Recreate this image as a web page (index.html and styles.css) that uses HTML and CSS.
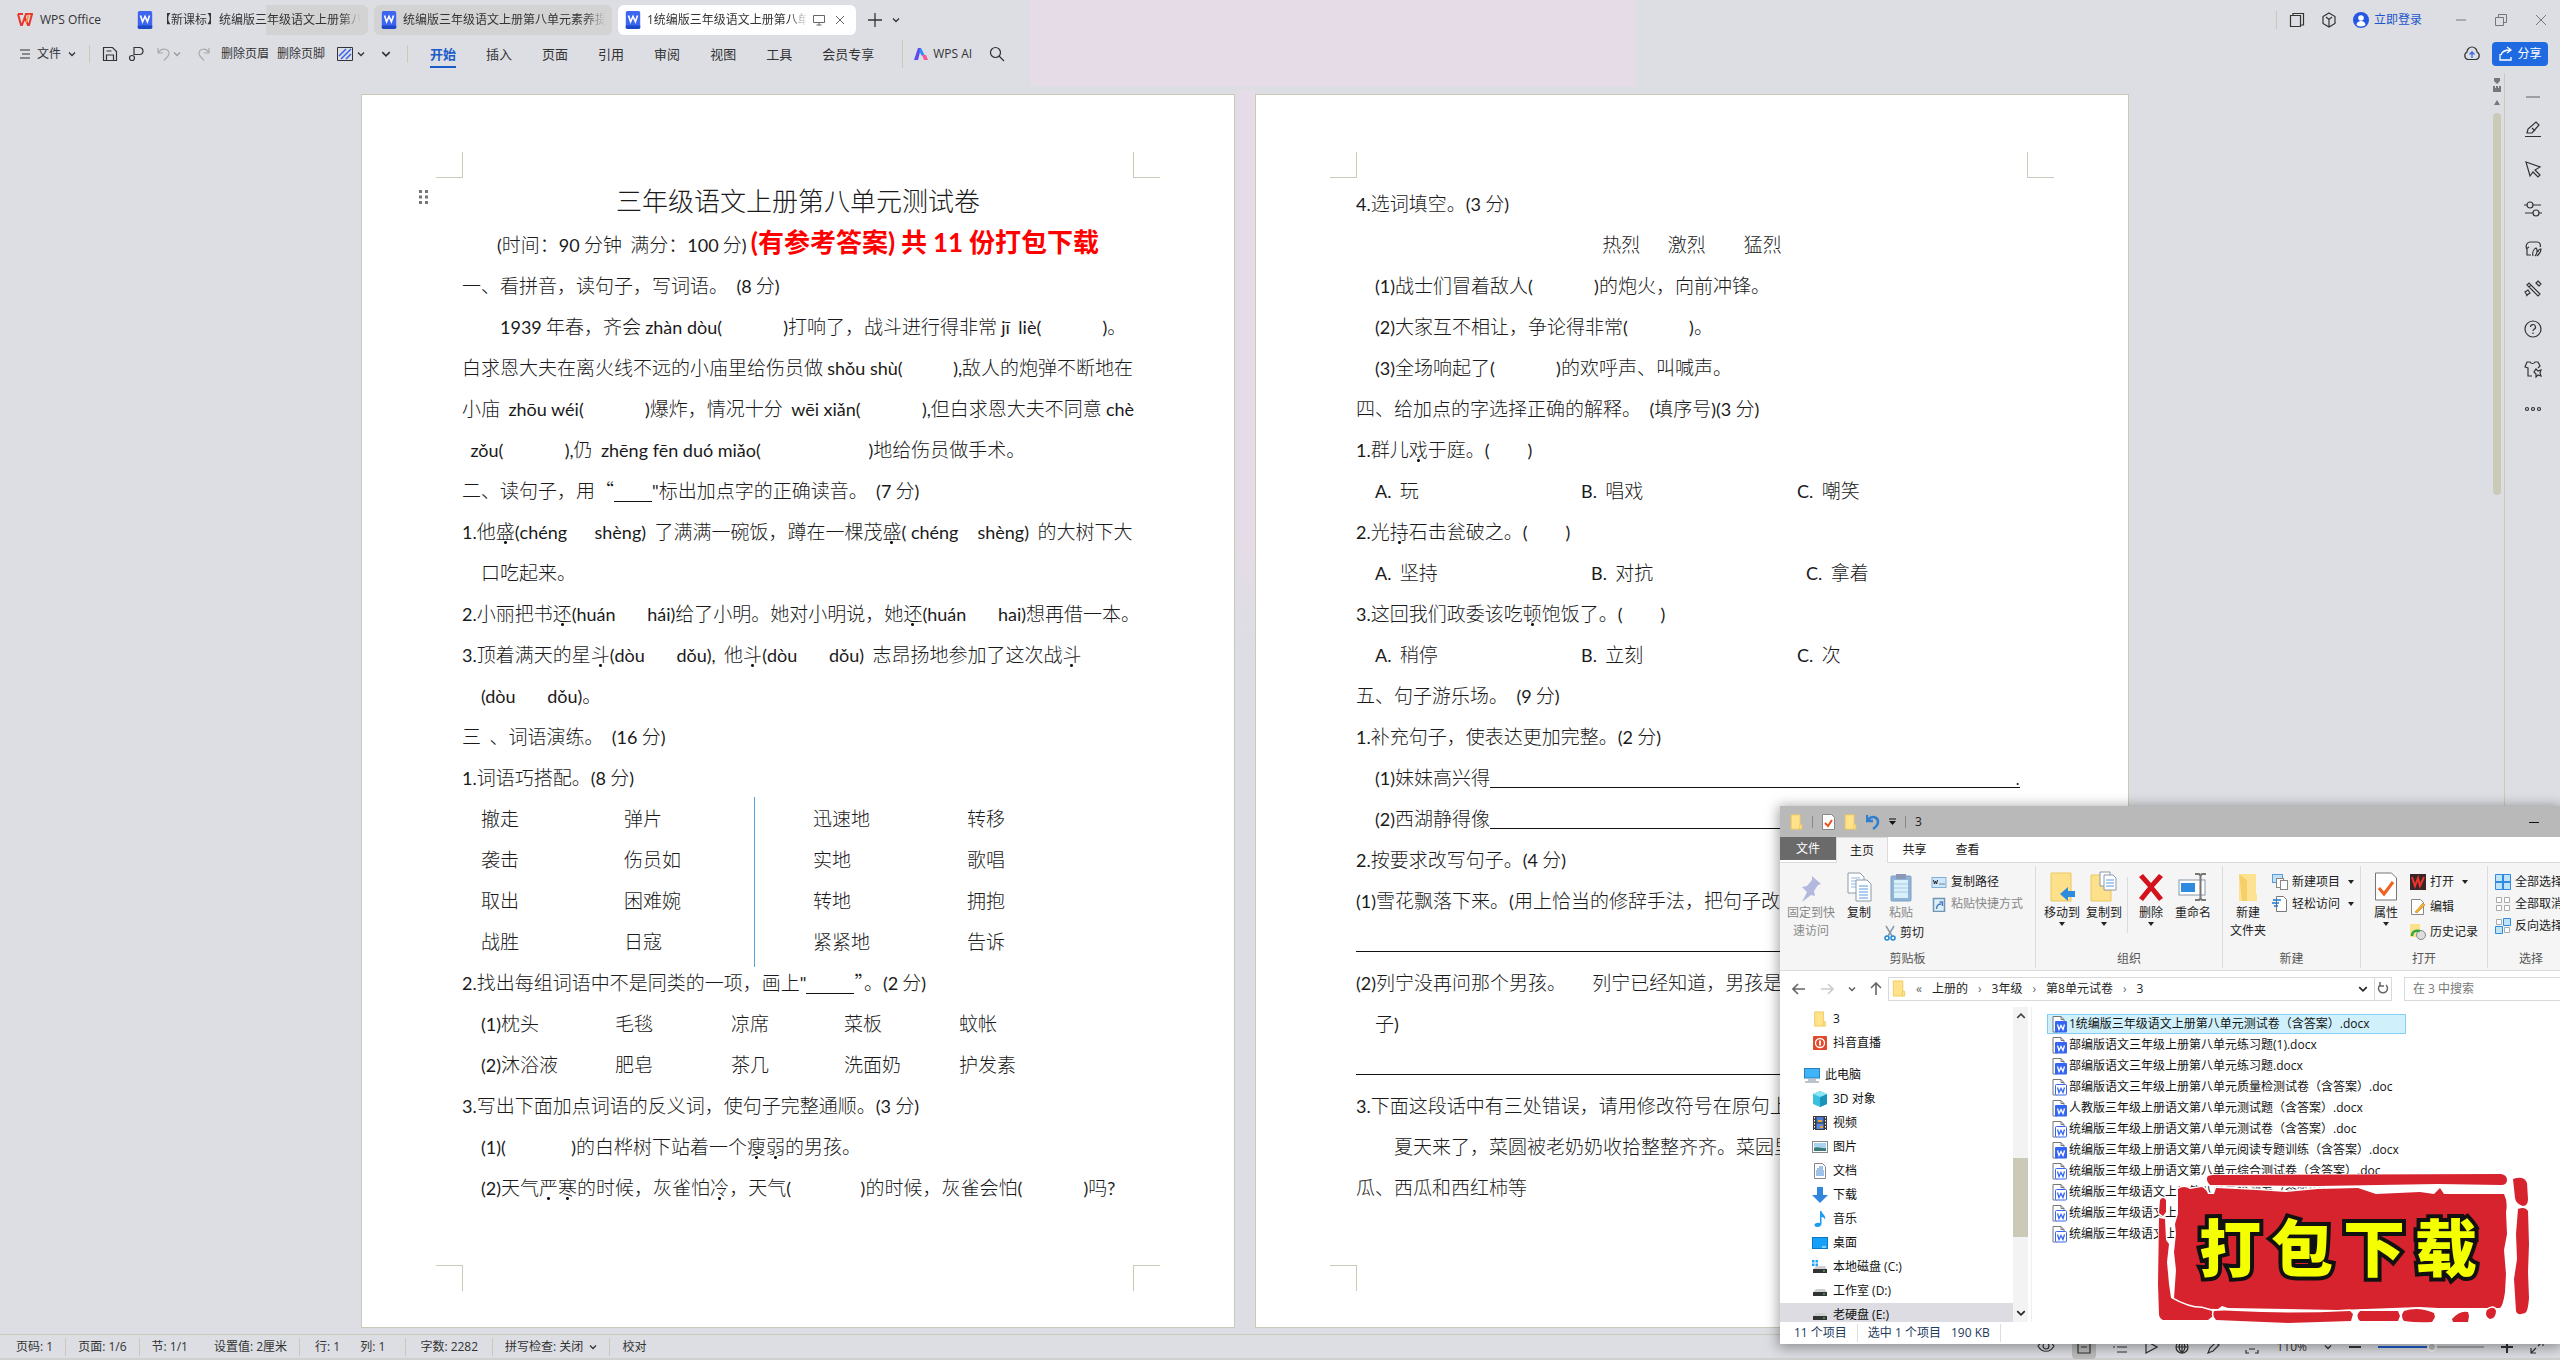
FILE: index.html
```html
<!DOCTYPE html>
<html lang="zh-CN">
<head>
<meta charset="utf-8">
<title>WPS Office</title>
<link rel="stylesheet" href="styles.css">
</head>
<body>
<svg class="defs" aria-hidden="true">
  <symbol id="chev" viewBox="0 0 8 8"><path d="M1 2.5 4 5.5 7 2.5" fill="none" stroke="currentColor" stroke-width="1.3"/></symbol>
  <symbol id="word" viewBox="0 0 16 20"><rect width="16" height="20" rx="2" fill="#3c66f0"/><path d="M0 16h16v2a2 2 0 0 1-2 2H2a2 2 0 0 1-2-2z" fill="#1d49c8"/><path d="M3 5l2.3 7L8 6l2.700 6L13 5" fill="none" stroke="#fff" stroke-width="1.800"/></symbol>
  <symbol id="folder" viewBox="0 0 14 18"><path d="M1 1h10v11h2v5H1z" fill="#ffe28a" stroke="#f0c95c"/><path d="M10.500 12v5" stroke="#f0c95c"/></symbol>
  <symbol id="docx" viewBox="0 0 15 17"><path d="M1 .5h8l3 3V8H5v8H1z" fill="#fff" stroke="#777"/><path d="M9 .5v3h3" fill="none" stroke="#777"/><rect x="3" y="5" width="12" height="11.500" rx="1" fill="#3566f2"/><path d="M5.500 8.500l1.500 5 2-4 2 4 1.500-5" fill="none" stroke="#fff" stroke-width="1.300"/></symbol>
  <symbol id="doc" viewBox="0 0 15 17"><path d="M1 .5h8l3 3V8H5v8H1z" fill="#fff" stroke="#777"/><path d="M9 .5v3h3" fill="none" stroke="#777"/><rect x="3.500" y="5.500" width="11" height="10.500" rx="1" fill="#fff" stroke="#3566f2"/><path d="M5.500 8.500l1.500 5 2-4 2 4 1.500-5" fill="none" stroke="#3566f2" stroke-width="1.300"/></symbol>
  <symbol id="drive" viewBox="0 0 16 16"><path d="M4 6h9l2 4H1z" fill="#cfcfcf"/><rect x="1" y="9" width="14" height="4" fill="#333"/><rect x="11" y="10.500" width="2" height="1" fill="#4fe07a"/></symbol>
  <symbol id="sheet" viewBox="0 0 32 32"><path d="M5 2h12l4 4v16H5z" fill="#fff" stroke="#8a98a8"/><path d="M8 7h9M8 10h9M8 13h9M8 16h5" stroke="#8db8e6"/><path d="M13 9h11l4 4v17H13z" fill="#fff" stroke="#8a98a8"/><path d="M16 15h9M16 18h9M16 21h9M16 24h9M16 27h9" stroke="#5b9be0"/></symbol>
  <symbol id="caret" viewBox="0 0 6 4"><path d="M0 0h6L3 4z" fill="#222"/></symbol>
</svg>

<div class="app">
  <header class="titlebar">
    <div class="brand">
      <svg width="16" height="14" viewBox="0 0 16 14"><path d="M1 1h5M1 1l3 11h1l4-11h6l-3 11h-1L8 5" fill="none" stroke="#e8352e" stroke-width="2"/><path d="M12 1l-3 9" stroke="#ff8a3c" stroke-width="1.500"/></svg>
      <span>WPS Office</span>
    </div>
    <nav class="doc-tabs" aria-label="文档">
      <button class="doc-tab half"><svg width="16" height="18"><use href="#word"/></svg><span class="name">【新课标】统编版三年级语文上册第八</span></button>
      <button class="doc-tab"><svg width="16" height="18"><use href="#word"/></svg><span class="name">统编版三年级语文上册第八单元素养提</span></button>
      <button class="doc-tab active"><svg width="16" height="18"><use href="#word"/></svg><span class="name">1统编版三年级语文上册第八单元</span>
        <svg class="mini" width="12" height="12" viewBox="0 0 12 12"><path d="M.5 1.500h11v7H.5zM6 8.500v2.500M3.500 11h5" fill="none" stroke="#666"/></svg>
        <svg class="mini" width="10" height="10" viewBox="0 0 10 10"><path d="M1 1l8 8M9 1L1 9" stroke="#666"/></svg></button>
    </nav>
    <button class="icon new-tab" aria-label="新建"><svg width="14" height="14" viewBox="0 0 14 14"><path d="M7 0v14M0 7h14" stroke="#333" stroke-width="1.300"/></svg></button>
    <button class="icon" aria-label="更多标签"><svg width="8" height="8"><use href="#chev"/></svg></button>
    <div class="window-tools">
      <button class="icon" aria-label="窗口"><svg width="16" height="16" viewBox="0 0 16 16"><path d="M1.500 3.500h10v11h-10zM4 3.500v-2h10.500V13h-3" fill="none" stroke="#333" stroke-width="1.200"/></svg></button>
      <button class="icon" aria-label="应用"><svg width="16" height="16" viewBox="0 0 16 16"><path d="M8 1l6 3.500v7L8 15l-6-3.500v-7zM5 5l3 2.500L11 5M8 7.500V15" fill="none" stroke="#333" stroke-width="1.200"/></svg></button>
      <a class="login" href="#login"><svg width="16" height="16" viewBox="0 0 16 16"><circle cx="8" cy="8" r="8" fill="#2457e6"/><circle cx="8" cy="6" r="2.800" fill="#fff"/><path d="M3.500 13a4.500 4 0 0 1 9 0 8 8 0 0 1-9 0z" fill="#fff"/></svg>立即登录</a>
      <div class="win-buttons">
        <button class="icon" aria-label="最小化"><svg width="14" height="14" viewBox="0 0 14 14"><path d="M2 7h10" stroke="#777"/></svg></button>
        <button class="icon" aria-label="还原"><svg width="14" height="14" viewBox="0 0 14 14"><path d="M1.500 4.500h8v8h-8zM4.500 4.500v-3h8v8h-3" fill="none" stroke="#777"/></svg></button>
        <button class="icon" aria-label="关闭"><svg width="14" height="14" viewBox="0 0 14 14"><path d="M2 2l10 10M12 2L2 12" stroke="#777"/></svg></button>
      </div>
    </div>
  </header>

  <div class="menubar">
    <button class="file"><svg width="10" height="10" viewBox="0 0 10 10"><path d="M0 1h10M2 5h8M0 9h10" stroke="#333" stroke-width="1.200"/></svg>文件<svg width="8" height="8"><use href="#chev"/></svg></button>
    <div class="quick">
      <button class="icon" aria-label="保存"><svg width="18" height="18" viewBox="0 0 18 18"><path d="M2.500 2.500h9l4 4v9h-13zM5.500 15v-5h7v5M5.500 6h5" fill="none" stroke="#333" stroke-width="1.200"/></svg></button>
      <button class="icon" aria-label="格式刷"><svg width="18" height="18" viewBox="0 0 18 18"><path d="M7 10V2.500h5.500a3 3 0 0 1 0 7H7" fill="none" stroke="#333" stroke-width="1.200"/><circle cx="5" cy="13" r="2.500" fill="none" stroke="#333" stroke-width="1.200"/></svg></button>
      <button class="icon undo" aria-label="撤销"><svg width="18" height="18" viewBox="0 0 18 18"><path d="M3 3v5h5M3.500 7.500C7 2 14 4 14 8.500c0 3-3 4-5 7" fill="none" stroke="#aaa" stroke-width="1.200"/></svg><svg width="8" height="8"><use href="#chev"/></svg></button>
      <button class="icon" aria-label="恢复"><svg width="18" height="18" viewBox="0 0 18 18"><path d="M14 3v5H9M13.500 7.500C11 2 4 4 4 8.500c0 3 3 4 5 7" fill="none" stroke="#aaa" stroke-width="1.200"/></svg></button>
      <button>删除页眉</button>
      <button>删除页脚</button>
      <button class="icon hatch" aria-label="底纹"><svg width="16" height="14" viewBox="0 0 16 14"><path d="M.5.5h15v13H.5z" fill="none" stroke="#333"/><path d="M2 9l7-7M4 12L14 2M9 12l5-5" stroke="#3a62e8" stroke-width="1.500"/></svg><svg width="8" height="8"><use href="#chev"/></svg></button>
      <button class="icon" aria-label="更多"><svg width="10" height="10"><use href="#chev"/></svg></button>
    </div>
    <nav class="ribbon-tabs" aria-label="功能区">
      <button class="active">开始</button><button>插入</button><button>页面</button><button>引用</button><button>审阅</button><button>视图</button><button>工具</button><button>会员专享</button>
    </nav>
    <div class="ai">
      <button><svg width="14" height="12" viewBox="0 0 14 12"><path d="M0 12L4 0h3L4 12z" fill="#5b4bf0"/><path d="M5 3l2-3 4 8H8z" fill="#2e8bff"/><path d="M8 7h4l2 5h-4z" fill="#f05a9a"/></svg>WPS AI</button>
      <button class="icon" aria-label="搜索"><svg width="16" height="16" viewBox="0 0 16 16"><circle cx="6.500" cy="6.500" r="5" fill="none" stroke="#333" stroke-width="1.200"/><path d="M10 10l5 5" stroke="#333" stroke-width="1.200"/></svg></button>
    </div>
    <div class="share-area">
      <button class="icon" aria-label="云端"><svg width="18" height="16" viewBox="0 0 18 16"><path d="M5 13.500a4 4 0 0 1-1-7.500 5 5 0 0 1 10 0 4 4 0 0 1-1 7.500z" fill="none" stroke="#333" stroke-width="1.200"/><path d="M9 12V6M6.500 8.500L9 6l2.500 2.500" fill="none" stroke="#3a62e8" stroke-width="1.300"/></svg></button>
      <button class="share"><svg width="16" height="16" viewBox="0 0 16 16"><path d="M2 8v6h11v-3M3 9c1-4 4-5 9-5M9 1l4 3-4 3" fill="none" stroke="#fff" stroke-width="1.300"/></svg>分享</button>
    </div>
  </div>

  <main class="workspace">
    <div class="desk">
      <div class="pages">
        <article class="page">
          <span class="crop tl"></span><span class="crop tr"></span><span class="crop bl"></span><span class="crop br"></span>
          <svg class="grip" width="9" height="14" viewBox="0 0 9 14"><path d="M0 0h3v3H0zM6 0h3v3H6zM0 5.500h3v3H0zM6 5.500h3v3H6zM0 11h3v3H0zM6 11h3v3H6z" fill="#777"/></svg>
          <h1>三年级语文上册第八单元测试卷</h1>
          <p class="subtitle"><span class="n">(</span>时间：<span class="n">90</span> 分钟  满分：<span class="n">100</span> 分<span class="n">)</span> <strong><span class="n">(</span>有参考答案<span class="n">)</span> 共 <span class="n">11</span> 份打包下载</strong></p>
          <p>一、看拼音，读句子，写词语。  <span class="n">(8</span> 分<span class="n">)</span></p>
          <p class="in2"><span class="n">1939</span> 年春，齐会 <span class="n">zhàn dòu(</span>　　　 <span class="n">)</span>打响了，战斗进行得非常 <span class="n">jī</span>  <span class="n">liè(</span>　　　 <span class="n">)</span>。</p>
          <p>白求恩大夫在离火线不远的小庙里给伤员做 <span class="n">shǒu shù(</span>　　   <span class="n">),</span>敌人的炮弹不断地在</p>
          <p>小庙  <span class="n">zhōu wéi(</span>　　　 <span class="n">)</span>爆炸，情况十分  <span class="n">wēi xiǎn(</span>　　　 <span class="n">),</span>但白求恩大夫不同意 <span class="n">chè</span></p>
          <p>  <span class="n">zǒu(</span>　　　 <span class="n">),</span>仍  <span class="n">zhēng fēn duó miǎo(</span>　　　　　   <span class="n">)</span>地给伤员做手术。</p>
          <p>二、读句子，用“<span class="rule w38"></span><span class="n">"</span>标出加点字的正确读音。  <span class="n">(7</span> 分<span class="n">)</span></p>
          <p><span class="n">1.</span>他<em>盛</em><span class="n">(chéng</span>　  <span class="n">shèng)</span>  了满满一碗饭，蹲在一棵茂<em>盛</em><span class="n">( chéng</span>　<span class="n">shèng)</span>  的大树下大</p>
          <p class="in1">口吃起来。</p>
          <p><span class="n">2.</span>小丽把书<em>还</em><span class="n">(huán</span>　   <span class="n">hái)</span>给了小明。她对小明说，她<em>还</em><span class="n">(huán</span>　   <span class="n">hai)</span>想再借一本。</p>
          <p><span class="n">3.</span>顶着满天的星<em>斗</em><span class="n">(dòu</span>　   <span class="n">dǒu),</span>  他<em>斗</em><span class="n">(dòu</span>　   <span class="n">dǒu)</span>  志昂扬地参加了这次战<em>斗</em></p>
          <p class="in1"><span class="n">(dòu</span>　   <span class="n">dǒu)</span>。</p>
          <p>三  、词语演练。  <span class="n">(16</span> 分<span class="n">)</span></p>
          <p><span class="n">1.</span>词语巧搭配。<span class="n">(8</span> 分<span class="n">)</span></p>
          <div class="pairs">
            <span>撤走</span><span>弹片</span><span>迅速地</span><span>转移</span>
            <span>袭击</span><span>伤员如</span><span>实地</span><span>歌唱</span>
            <span>取出</span><span>困难婉</span><span>转地</span><span>拥抱</span>
            <span>战胜</span><span>日寇</span><span>紧紧地</span><span>告诉</span>
          </div>
          <p><span class="n">2.</span>找出每组词语中不是同类的一项，画上<span class="n">"</span><span class="rule w48"></span>”。<span class="n">(2</span> 分<span class="n">)</span></p>
          <div class="groups">
            <span><span class="n">(1)</span>枕头</span><span>毛毯</span><span>凉席</span><span>菜板</span><span>蚊帐</span>
            <span><span class="n">(2)</span>沐浴液</span><span>肥皂</span><span>茶几</span><span>洗面奶</span><span>护发素</span>
          </div>
          <p><span class="n">3.</span>写出下面加点词语的反义词，使句子完整通顺。<span class="n">(3</span> 分<span class="n">)</span></p>
          <p class="in1"><span class="n">(1)(</span>　　　  <span class="n">)</span>的白桦树下站着一个<em>瘦弱</em>的男孩。</p>
          <p class="in1"><span class="n">(2)</span>天气<em>严寒</em>的时候，灰雀怕<em>冷</em>，天气<span class="n">(</span>　　　   <span class="n">)</span>的时候，灰雀会怕<span class="n">(</span>　　　 <span class="n">)</span>吗<span class="n">?</span></p>
        </article>

        <article class="page">
          <span class="crop tl"></span><span class="crop tr"></span><span class="crop bl"></span><span class="crop br"></span>
          <p><span class="n">4.</span>选词填空。<span class="n">(3</span> 分<span class="n">)</span></p>
          <p class="center">热烈　  激烈　　猛烈</p>
          <p class="in1"><span class="n">(1)</span>战士们冒着敌人<span class="n">(</span>　　　 <span class="n">)</span>的炮火，向前冲锋。</p>
          <p class="in1"><span class="n">(2)</span>大家互不相让，争论得非常<span class="n">(</span>　　　 <span class="n">)</span>。</p>
          <p class="in1"><span class="n">(3)</span>全场响起了<span class="n">(</span>　　　 <span class="n">)</span>的欢呼声、叫喊声。</p>
          <p>四、给加点的字选择正确的解释。  <span class="n">(</span>填序号<span class="n">)(3</span> 分<span class="n">)</span></p>
          <p><span class="n">1.</span>群儿<em>戏</em>于庭。<span class="n">(</span>　　<span class="n">)</span></p>
          <div class="options"><span><span class="n">A.</span>  玩</span><span><span class="n">B.</span>  唱戏</span><span><span class="n">C.</span>  嘲笑</span></div>
          <p><span class="n">2.</span>光<em>持</em>石击瓮破之。<span class="n">(</span>　　<span class="n">)</span></p>
          <div class="options wide"><span><span class="n">A.</span>  坚持</span><span><span class="n">B.</span>  对抗</span><span><span class="n">C.</span>  拿着</span></div>
          <p><span class="n">3.</span>这回我们政委该吃<em>顿</em>饱饭了。<span class="n">(</span>　　<span class="n">)</span></p>
          <div class="options"><span><span class="n">A.</span>  稍停</span><span><span class="n">B.</span>  立刻</span><span><span class="n">C.</span>  次</span></div>
          <p>五、句子游乐场。  <span class="n">(9</span> 分<span class="n">)</span></p>
          <p><span class="n">1.</span>补充句子，使表达更加完整。<span class="n">(2</span> 分<span class="n">)</span></p>
          <p class="in1 fill"><span><span class="n">(1)</span>妹妹高兴得</span><span class="answer">.</span></p>
          <p class="in1 fill"><span><span class="n">(2)</span>西湖静得像</span><span class="answer"></span></p>
          <p><span class="n">2.</span>按要求改写句子。<span class="n">(4</span> 分<span class="n">)</span></p>
          <p><span class="n">(1)</span>雪花飘落下来。<span class="n">(</span>用上恰当的修辞手法，把句子改</p>
          <p class="fill"><span class="answer"></span></p>
          <p><span class="n">(2)</span>列宁没再问那个男孩。　    列宁已经知道，男孩是</p>
          <p class="in1">子<span class="n">)</span></p>
          <p class="fill"><span class="answer"></span></p>
          <p><span class="n">3.</span>下面这段话中有三处错误，请用修改符号在原句上</p>
          <p class="in2">夏天来了，菜圆被老奶奶收拾整整齐齐。菜园里</p>
          <p>瓜、西瓜和西红柿等</p>
        </article>
      </div>
    </div>
    <div class="scroll">
      <svg width="10" height="14" viewBox="0 0 10 14"><path d="M2 0h6v3L5 6 2 3zM1 8h2v2h1V8h2v2h1V8h2v6H1z" fill="#777"/></svg>
      <svg width="6" height="5" viewBox="0 0 6 5"><path d="M0 5l3-5 3 5z" fill="#777"/></svg>
      <div class="thumb"></div>
    </div>
    <aside class="side">
      <button class="icon fold" aria-label="收起"><svg width="18" height="10" viewBox="0 4 18 10"><path d="M2 9h14" stroke="#888" stroke-width="1.500"/></svg></button>
      <button class="icon" aria-label="编辑"><svg width="18" height="18" viewBox="0 0 18 18"><path d="M1 16.500h16M3 13l1-4 8-7 3 3-7 8zM8 8l3 3" /></svg></button>
      <button class="icon" aria-label="选择"><svg width="18" height="18" viewBox="0 0 18 18"><path d="M2 2l14 5-5 3 5 5-2 2-5-5-3 4z"/></svg></button>
      <button class="icon" aria-label="设置"><svg width="18" height="18" viewBox="0 0 18 18"><circle cx="6" cy="5" r="3"/><circle cx="12" cy="13" r="3"/><path d="M0 5h3M9 5h8M1 13h8M15 13h3"/></svg></button>
      <button class="icon" aria-label="翻译"><svg width="18" height="18" viewBox="0 0 18 18"><path d="M7 15H3V9M3 9c-2-3 0-7 3-7h7c3 0 4 3 3 5M2 9l3-2M9 16c-1-4 1-7 3-8 2 2 1 6-1 8M13 16c1-1 4-3 4-7-2 0-3 2-3 3"/></svg></button>
      <button class="icon" aria-label="工具"><svg width="18" height="18" viewBox="0 0 18 18"><path d="M3 5l2-2 11 11-2 2zM5 7l2-2M12 3l3 3M14 1l3 3-2 2-3-3zM1 12l3-2 2 3-3 2zM2 16l2-1"/></svg></button>
      <button class="icon" aria-label="帮助"><svg width="18" height="18" viewBox="0 0 18 18"><circle cx="9" cy="9" r="8"/><path d="M6.500 7a2.500 2.500 0 1 1 3.500 2.300c-1 .5-1 1-1 1.700M9 12.500v1.500"/></svg></button>
      <button class="icon" aria-label="皮肤"><svg width="18" height="18" viewBox="0 0 18 18"><path d="M8 16H4V8L1 7l2-5h3c1 2 4 2 5 0h3l2 4-2 2M12 9l2 2 3-1-1 3 1 3-3-1-2 2v-3l-2-2z"/></svg></button>
      <button class="icon" aria-label="更多"><svg width="18" height="18" viewBox="0 0 18 18"><circle cx="3" cy="9" r="1.500"/><circle cx="9" cy="9" r="1.500"/><circle cx="15" cy="9" r="1.500"/></svg></button>
    </aside>
  </main>

  <footer class="status">
    <span class="s1">页码: 1</span><span class="s2">页面: 1/6</span><span class="s3">节: 1/1</span><span class="s4">设置值: 2厘米</span><span class="s5">行: 1</span><span class="s6">列: 1</span><span class="s7">字数: 2282</span><span class="s8">拼写检查: 关闭<svg width="8" height="8"><use href="#chev"/></svg></span><span class="s9">校对</span>
    <div class="view">
      <svg width="18" height="18" viewBox="0 0 18 18"><path d="M1 8c4-6 12-6 16 0-4 7-12 7-16 0z"/><circle cx="9" cy="8" r="3"/></svg>
      <span class="pressed"><svg width="14" height="14" viewBox="0 0 14 14"><path d="M1 1h12v12H1zM4 7h6"/></svg></span>
      <svg width="14" height="14" viewBox="0 0 14 14"><path d="M0 2h2M4 2h10M0 7h2M4 7h10M4 12h10"/></svg>
      <svg width="14" height="14" viewBox="0 0 14 14"><path d="M2 1l11 6-11 6z"/></svg>
      <svg width="14" height="14" viewBox="0 0 14 14"><circle cx="7" cy="7" r="6"/><path d="M1 7h12M7 1v12M7 1c-4 4-4 8 0 12 4-4 4-8 0-12"/></svg>
      <svg width="14" height="14" viewBox="0 0 14 14"><path d="M2 13l2-5 6-6 3 3-6 6z"/></svg>
      <svg class="fit" width="14" height="14" viewBox="0 0 14 14"><path d="M1 4V1h3M10 1h3v3M1 10v3h3M10 13h3v-3M4 9h6"/></svg>
      <span class="zoom">110%</span>
      <svg width="8" height="8"><use href="#chev"/></svg>
      <svg width="12" height="12" viewBox="0 0 12 12"><path d="M0 6h12" stroke-width="2"/></svg>
      <input type="range" min="0" max="100" value="51" aria-label="缩放">
      <svg width="12" height="12" viewBox="0 0 12 12"><path d="M0 6h12M6 0v12" stroke-width="2"/></svg>
      <svg width="14" height="14" viewBox="0 0 14 14"><path d="M8 1h5v5M6 13H1V8M13 1L8 6M1 13l5-5"/></svg>
    </div>
  </footer>

  <section class="explorer" aria-label="文件资源管理器">
    <div class="ex-title">
      <svg width="13" height="16"><use href="#folder"/></svg><i></i>
      <svg width="13" height="16" viewBox="0 0 13 16"><path d="M.5.5h9l3 3v12H.5z" fill="#fff" stroke="#888"/><path d="M3 9l3 3 4-6" fill="none" stroke="#e8501e" stroke-width="2"/></svg>
      <svg width="13" height="16"><use href="#folder"/></svg>
      <svg width="14" height="16" viewBox="0 0 14 16"><path d="M1 1v6h6M2 6c4-5 10-3 10 2 0 3-2 5-5 7" fill="none" stroke="#2e7fd0" stroke-width="2.500"/></svg>
      <svg width="7" height="7" viewBox="0 0 7 7"><path d="M0 1h7" stroke="#111"/><path d="M0 3h7L3.500 7z" fill="#111"/></svg><i></i>
      <span>3</span>
      <button class="icon ex-min" aria-label="最小化"><svg width="10" height="10" viewBox="0 0 10 10"><path d="M0 5.500h10" stroke="#111"/></svg></button>
    </div>
    <nav class="ex-tabs" aria-label="选项卡"><button class="file-tab">文件</button><button class="on">主页</button><button>共享</button><button>查看</button></nav>
    <div class="ribbon">
      <div class="group g-clip">
        <div class="items">
          <button class="big pin dim"><svg width="32" height="32" viewBox="0 0 32 32"><path d="M17 5l9 8-3 1-4 6 1 5-4-1-9 7 5-10-5-5 5-1 5-6z" fill="#b3b9dc"/></svg>固定到快<br>速访问</button>
          <button class="big"><svg width="32" height="32"><use href="#sheet"/></svg>复制</button>
          <div class="col">
            <button class="big dim"><svg width="32" height="32" viewBox="0 0 32 32"><rect x="6" y="5" width="20" height="25" rx="1" fill="#8fb4d8" stroke="#7d9fc4"/><rect x="9" y="9" width="14" height="18" fill="#d8f0fa"/><path d="M9 13h14M9 17h14M9 21h14" stroke="#a8c8e8"/><path d="M11 3h10v5H11z" fill="#8a98b8"/></svg>粘贴</button>
            <button class="small cut"><svg width="12" height="16" viewBox="0 0 12 16"><path d="M2 1l6 10M10 1L4 11" stroke="#8a98a8" stroke-width="1.500"/><circle cx="3" cy="13" r="2" fill="none" stroke="#1e88d8" stroke-width="1.500"/><circle cx="9" cy="13" r="2" fill="none" stroke="#1e88d8" stroke-width="1.500"/></svg>剪切</button>
          </div>
          <div class="smalls">
            <button class="small"><svg width="15" height="11" viewBox="0 0 15 11"><rect x=".5" y=".5" width="14" height="10" fill="#cfe6fa" stroke="#7fb0dc"/><path d="M2 3l1 4 1-3 1 3 1-4M8 7h1M10 7h1M12 7h1" fill="none" stroke="#222"/></svg>复制路径</button>
            <button class="small dim"><svg width="15" height="15" viewBox="0 0 15 15"><rect x="2" y="1.500" width="11" height="13" fill="#dceef8" stroke="#6f94b8" stroke-width="1.500"/><path d="M5 12c0-4 2-5 5-5M8 5h3v4" fill="none" stroke="#4a7cc0" stroke-width="1.300"/></svg>粘贴快捷方式</button>
          </div>
        </div>
        <div class="label">剪贴板</div>
      </div>
      <div class="group g-org">
        <div class="items">
          <button class="big"><svg width="32" height="32" viewBox="0 0 32 32"><path d="M5 2h20v28H5z" fill="#fde08a" stroke="#ecc860"/><path d="M29 20v6h-7v4l-8-7 8-7v4z" fill="#2e8be0"/></svg>移动到<svg class="ar" width="6" height="4"><use href="#caret"/></svg></button>
          <button class="big"><svg width="32" height="32" viewBox="0 0 32 32"><path d="M3 4h20v26H3z" fill="#fde08a" stroke="#ecc860"/><path d="M12 1h10v14H12z" fill="#fff" stroke="#8a98a8"/><path d="M16 4h9l3 3v12H16z" fill="#fff" stroke="#8a98a8"/><path d="M18 9h8M18 12h8M18 15h8" stroke="#5b9be0"/></svg>复制到<svg class="ar" width="6" height="4"><use href="#caret"/></svg></button>
          <i class="bar"></i>
          <button class="big"><svg width="32" height="32" viewBox="0 0 32 32"><path d="M4 6l4-3 8 9 8-9 4 3-9 10 9 11-4 3-8-10-8 10-4-3 9-11z" fill="#d3121c"/></svg>删除<svg class="ar" width="6" height="4"><use href="#caret"/></svg></button>
          <button class="big"><svg width="32" height="32" viewBox="0 0 32 32"><rect x="2" y="9" width="26" height="15" fill="#fff" stroke="#8a98a8"/><rect x="4" y="12" width="14" height="9" fill="#2e8be0"/><path d="M18 3h4l1.500 1.500L25 3h4M23.500 4v24M18 29h4l1.500-1.500L25 29h4" fill="none" stroke="#777" stroke-width="2"/></svg>重命名</button>
        </div>
        <div class="label">组织</div>
      </div>
      <div class="group g-new">
        <div class="items">
          <button class="big"><svg width="32" height="32" viewBox="0 0 32 32"><path d="M7 3h17v20h1v7H7z" fill="#fde391"/><path d="M7 3l8 6v21H10z" fill="#f6cf6a"/></svg>新建<br>文件夹</button>
          <div class="smalls">
            <button class="small"><svg width="16" height="16" viewBox="0 0 16 16"><rect x=".5" y=".5" width="10" height="8" fill="#bfe0f5" stroke="#5b9be0"/><rect x="4.500" y="4.500" width="7" height="9" fill="#fff" stroke="#888"/><rect x="8.500" y="6.500" width="7" height="9" fill="#fff" stroke="#888"/></svg>新建项目<svg width="6" height="4"><use href="#caret"/></svg></button>
            <button class="small"><svg width="16" height="16" viewBox="0 0 16 16"><path d="M4.500.5h7l3 3v12h-10z" fill="#fff" stroke="#777"/><path d="M1 4h8M0 7h7M2 10h4" stroke="#1e78d0" stroke-width="1.500"/></svg>轻松访问<svg width="6" height="4"><use href="#caret"/></svg></button>
          </div>
        </div>
        <div class="label">新建</div>
      </div>
      <div class="group g-open">
        <div class="items">
          <button class="big"><svg width="32" height="32" viewBox="0 0 32 32"><path d="M5.500 2h16l5 5v22h-21z" fill="#fff" stroke="#777"/><path d="M9 17l5 6 9-12" fill="none" stroke="#f0601e" stroke-width="3"/></svg>属性<svg class="ar" width="6" height="4"><use href="#caret"/></svg></button>
          <div class="smalls three">
            <button class="small"><svg width="16" height="16" viewBox="0 0 16 16"><rect width="16" height="16" fill="#3a2626"/><path d="M2 3l3 9 3-8 2 8 4-9" fill="none" stroke="#f0342c" stroke-width="2"/></svg>打开<svg width="6" height="4"><use href="#caret"/></svg></button>
            <button class="small"><svg width="16" height="16" viewBox="0 0 16 16"><path d="M1.500.5h9l3 3v12h-12z" fill="#fff" stroke="#888"/><path d="M5 13l8-9 2 2-8 8z" fill="#f0b030" stroke="#c08020" stroke-width=".6"/></svg>编辑</button>
            <button class="small"><svg width="16" height="16" viewBox="0 0 16 16"><path d="M0 0h10v13H0z" fill="#fde08a"/><circle cx="11" cy="11" r="4.500" fill="#ddd" stroke="#888"/><path d="M2 12c0-5 4-6 8-5" fill="none" stroke="#2ea84a" stroke-width="2.500"/></svg>历史记录</button>
          </div>
        </div>
        <div class="label">打开</div>
      </div>
      <div class="group g-sel">
        <div class="items">
          <div class="smalls">
            <button class="small"><svg width="16" height="16" viewBox="0 0 16 16"><path d="M.5.5h15v15H.5z" fill="#bfe4fa" stroke="#2e8be0"/><path d="M8 0v16M0 8h16" stroke="#2e8be0" stroke-width="2"/></svg>全部选择</button>
            <button class="small"><svg width="16" height="16" viewBox="0 0 16 16"><path d="M1.500 1.500h5v5h-5zM9.500 1.500h5v5h-5zM1.500 9.500h5v5h-5zM9.500 9.500h5v5h-5z" fill="#fff" stroke="#aaa"/></svg>全部取消</button>
            <button class="small"><svg width="16" height="16" viewBox="0 0 16 16"><path d="M1.500 1.500h5v5h-5zM9.500 9.500h5v5h-5z" fill="#fff" stroke="#aaa"/><path d="M8.500.5h7v7h-7zM.5 8.500h7v7h-7z" fill="#bfe4fa" stroke="#2e8be0"/></svg>反向选择</button>
          </div>
        </div>
        <div class="label">选择</div>
      </div>
    </div>
    <div class="ex-nav">
      <button class="icon" aria-label="后退"><svg width="14" height="12" viewBox="0 0 14 12"><path d="M6 1L1 6l5 5M1 6h12" fill="none" stroke="#666" stroke-width="1.600"/></svg></button>
      <button class="icon" aria-label="前进"><svg width="14" height="12" viewBox="0 0 14 12"><path d="M8 1l5 5-5 5M13 6H1" fill="none" stroke="#ccc" stroke-width="1.600"/></svg></button>
      <button class="icon" aria-label="最近"><svg width="8" height="8"><use href="#chev"/></svg></button>
      <button class="icon" aria-label="上移"><svg width="12" height="14" viewBox="0 0 12 14"><path d="M1 6l5-5 5 5M6 1v12" fill="none" stroke="#666" stroke-width="1.600"/></svg></button>
      <div class="address">
        <svg width="14" height="17"><use href="#folder"/></svg><b>«</b><span>上册的</span><b>›</b><span>3年级</span><b>›</b><span>第8单元试卷</span><b>›</b><span>3</span>
        <svg class="drop" width="10" height="10"><use href="#chev"/></svg>
        <button class="icon reload" aria-label="刷新"><svg width="12" height="13" viewBox="0 0 12 13"><path d="M3 3a4.500 4.500 0 1 0 6 0M3 0v4h4" fill="none" stroke="#666" stroke-width="1.500"/></svg></button>
      </div>
      <input class="search" type="text" placeholder="在 3 中搜索" aria-label="搜索">
    </div>
    <div class="ex-body">
      <ul class="tree">
        <li><svg width="16" height="16" viewBox="-1 0 16 18"><use href="#folder" width="14" height="18"/></svg>3</li>
        <li class="last"><svg width="16" height="16" viewBox="0 0 16 16"><rect x="1" y="1" width="14" height="14" rx="1" fill="#e0492c"/><circle cx="8" cy="8" r="4.500" fill="none" stroke="#fff" stroke-width="1.300"/><path d="M8 5.500v5" stroke="#fff" stroke-width="1.800"/></svg>抖音直播</li>
        <li class="root"><svg width="16" height="16" viewBox="0 0 16 16"><rect x=".5" y="1.500" width="15" height="9.500" fill="#3fb4fa" stroke="#2b7fb8"/><path d="M4 13h8M1 15h14" stroke="#7a8a98"/></svg>此电脑</li>
        <li><svg width="16" height="16" viewBox="0 0 16 16"><path d="M8 0l7 3v10l-7 3-7-3V3z" fill="#38c0dc"/><path d="M8 6v10l7-3V3z" fill="#1b93b8"/><path d="M8 0l7 3-7 3-7-3z" fill="#8be4f2"/></svg>3D 对象</li>
        <li><svg width="16" height="16" viewBox="0 0 16 16"><rect x="1" y="1" width="14" height="14" fill="#3a3a3a"/><path d="M2.500 2v13M13.500 2v13" stroke="#fff" stroke-dasharray="1.500 1.500"/><rect x="4.500" y="2" width="7" height="5.500" fill="#4a7ad8"/><rect x="4.500" y="8.500" width="7" height="5.500" fill="#5a8ae8"/><path d="M6 5h4v2H6zM8 11h3v2H8z" fill="#e8a030"/></svg>视频</li>
        <li><svg width="16" height="16" viewBox="0 0 16 16"><rect x=".5" y="2.500" width="15" height="11" fill="#fff" stroke="#888"/><rect x="2" y="4" width="12" height="8" fill="#a8d4f0"/><path d="M2 9c4-2 8 1 12 0v3H2z" fill="#3a7a78"/></svg>图片</li>
        <li><svg width="16" height="16" viewBox="0 0 16 16"><path d="M2.500.5h8l3 3v12h-11z" fill="#fff" stroke="#888"/><path d="M4 8h8M4 10h8M4 12h8M7 4h4M5 6h6" stroke="#3a88d0"/></svg>文档</li>
        <li><svg width="16" height="16" viewBox="0 0 16 16"><path d="M5 0h6v8h5l-8 8-8-8h5z" fill="#2f86dc"/></svg>下载</li>
        <li><svg width="16" height="16" viewBox="0 0 16 16"><path d="M8 0h1.500c0 3 5 4 3.500 9 0-2-2-3-3.500-3v7c0 2-2 3-4 3s-3-1-3-2.300S5 11 8 12z" fill="#1e9cf0"/></svg>音乐</li>
        <li><svg width="16" height="16" viewBox="0 0 16 16"><rect x=".5" y="2.500" width="15" height="11" fill="#16a0fa" stroke="#0b78c8"/><path d="M10 12h4" stroke="#fff"/></svg>桌面</li>
        <li><svg width="16" height="16" viewBox="0 0 16 16"><use href="#drive" y="1" width="16" height="16"/><path d="M0 1h2.500v2.500H0zM3.500 1H6v2.500H3.500zM0 4.500h2.500V7H0zM3.500 4.500H6V7H3.500z" fill="#1ea4f0"/></svg>本地磁盘 (C:)</li>
        <li><svg width="16" height="16"><use href="#drive"/></svg>工作室 (D:)</li>
        <li class="sel"><svg width="16" height="16"><use href="#drive"/></svg>老硬盘 (E:)</li>
      </ul>
      <div class="tree-scroll"><svg width="10" height="10" viewBox="0 0 8 8"><path d="M1 5.500 4 2.500 7 5.500" fill="none" stroke="#444" stroke-width="1.300"/></svg><div class="thumb"></div><svg width="10" height="10"><use href="#chev"/></svg></div>
      <ul class="files">
        <li class="sel"><svg width="15" height="17"><use href="#docx"/></svg>1统编版三年级语文上册第八单元测试卷（含答案）.docx</li>
        <li><svg width="15" height="17"><use href="#docx"/></svg>部编版语文三年级上册第八单元练习题(1).docx</li>
        <li><svg width="15" height="17"><use href="#docx"/></svg>部编版语文三年级上册第八单元练习题.docx</li>
        <li><svg width="15" height="17"><use href="#doc"/></svg>部编版语文三年级上册第八单元质量检测试卷（含答案）.doc</li>
        <li><svg width="15" height="17"><use href="#docx"/></svg>人教版三年级上册语文第八单元测试题（含答案）.docx</li>
        <li><svg width="15" height="17"><use href="#doc"/></svg>统编版三年级上册语文第八单元测试卷（含答案）.doc</li>
        <li><svg width="15" height="17"><use href="#docx"/></svg>统编版三年级上册语文第八单元阅读专题训练（含答案）.docx</li>
        <li><svg width="15" height="17"><use href="#doc"/></svg>统编版三年级上册语文第八单元综合测试卷（含答案）.doc</li>
        <li><svg width="15" height="17"><use href="#doc"/></svg>统编版三年级语文上册第八单元检测卷（含答案）.doc</li>
        <li><svg width="15" height="17"><use href="#doc"/></svg>统编版三年级语文上</li>
        <li><svg width="15" height="17"><use href="#doc"/></svg>统编版三年级语文上</li>
      </ul>
    </div>
    <div class="ex-status"><span>11 个项目</span><span>选中 1 个项目</span><span>190 KB</span></div>
  </section>

  <div class="stamp">
    <svg viewBox="0 0 372 156" width="372" height="156">
      <g fill="#d6232e" stroke="#fff" stroke-width="3" paint-order="stroke">
        <path d="M50 2Q56 0 64 1L343 0Q349 1 349 6Q349 11 343 11L280 10L160 12L52 11Q47 6 50 2Z"/>
        <path d="M20 15Q26 11 32 15L44 13Q49 16 50 20L56 20L58 14L98 16L128 18L160 15L200 14L218 20L262 18L276 20L282 14L286 20L346 20Q350 28 348 38L349 60L346 76L348 100L347 118Q345 132 342 134L280 134L262 133L180 136L70 134L64 132L60 135L20 134Q15 132 16 124L18 96L16 78L18 60L17 50L20 40Z"/>
        <path d="M355 5Q366 1 369 9L370 25Q370 32 365 32Q358 30 357 24Z"/>
        <path d="M360 35Q367 32 370 37L371 70L370 98L371 124Q370 138 367 139Q359 142 358 137L356 105L359 85L358 60Z"/>
        <path d="M2 26Q5 22 8 26L8 38L5 42L1 39Z"/>
        <path d="M1 44L7 45L8 66L11 70L9 88L11 110L13 124Q30 134 44 134L54 137L55 142L50 146L5 146Q1 144 1 140L0 110Z"/>
        <path d="M56 137Q66 136 78 137Q130 140 192 137L195 140L193 147L130 149L58 146Q54 142 56 137ZM202 137L240 137L242 142L240 147L202 147Q197 142 202 137ZM246 137Q260 132 276 139L277 143L274 148Q260 149 246 147Q242 142 246 137ZM294 145Q302 136 310 138L311 142L310 148L295 148ZM329 136Q336 131 338 137Q338 144 332 145Q326 142 329 136Z"/>
      </g>
    </svg>
    <strong><span>打</span><span>包</span><span>下</span><span>载</span></strong>
  </div>
</div>
</body>
</html>
```
FILE: styles.css
```css
* { box-sizing: border-box; }
body {
  margin: 0;
  background: #dcdee3;
  color: #333;
  font: 12px/18px "Open Sans", "Noto Sans CJK SC", sans-serif;
}
.defs { position: absolute; width: 0; height: 0; }
svg { flex: none; }
button {
  margin: 0; padding: 0; border: 0; background: none;
  color: inherit; font: inherit; white-space: nowrap;
}
a { color: inherit; text-decoration: none; }
ul { margin: 0; padding: 0; list-style: none; }
.icon { display: flex; align-items: center; justify-content: center; }

.app { position: relative; display: flex; flex-direction: column; min-height: 100vh; overflow: hidden; }
.app::before {
  content: ""; position: absolute; left: 1030px; top: 0; z-index: -1;
  width: 606px; height: 86px; background: #e6dce7;
}

/* title bar */
.titlebar { display: flex; align-items: center; height: 40px; padding: 0 12px 0 17px; }
.brand { display: flex; align-items: center; gap: 7px; width: 113px; }
.doc-tabs { display: flex; gap: 6px; }
.doc-tab {
  display: flex; align-items: center; gap: 6px;
  width: 238px; height: 30px; padding: 0 7px; border-radius: 6px;
  background: #d3d3d4; text-align: left;
}
.doc-tab.half { background: linear-gradient(to right, transparent 136px, #d3d3d4 136px); }
.doc-tab.active { background: #fff; }
.doc-tab .name {
  flex: 1; overflow: hidden;
  mask-image: linear-gradient(to right, #000 90%, transparent);
}
.doc-tab .mini { margin-right: 4px; }
.new-tab { margin: 0 10px 0 12px; }
.window-tools { display: flex; align-items: center; gap: 16px; margin-left: auto; padding-left: 12px; border-left: 1px solid #cbc9b8; }
.login { display: flex; align-items: center; gap: 5px; color: #1c55cc; }
.win-buttons { display: flex; gap: 26px; margin-left: 16px; }

/* menu bar */
.menubar { display: flex; align-items: center; height: 33px; padding: 0 12px 5px 20px; }
.file { display: flex; align-items: center; gap: 7px; padding-right: 13px; border-right: 1px solid #cbc9b8; }
.quick { display: flex; align-items: center; gap: 8px; padding: 0 16px 0 11px; border-right: 1px solid #cbc9b8; }
.undo { padding: 0 6px 0 2px; color: #999; }
.hatch { gap: 4px; margin: 0 8px 0 4px; }
.ribbon-tabs { display: flex; gap: 30px; padding: 0 28px 0 22px; border-right: 1px solid #cbc9b8; font-size: 13px; }
.ribbon-tabs button { height: 28px; border-bottom: 2px solid transparent; border-top: 2px solid transparent; }
.ribbon-tabs .active { color: #1c5cc8; font-weight: 700; border-bottom-color: #1c5cc8; }
.ai { display: flex; gap: 17px; padding-left: 11px; }
.ai button { display: flex; align-items: center; gap: 5px; }
.share-area { display: flex; align-items: center; gap: 11px; margin-left: auto; }
.share {
  display: flex; align-items: center; justify-content: center; gap: 3px;
  width: 56px; height: 24px; border-radius: 4px; background: #1f6ae1; color: #fff;
}

/* document area */
.workspace { flex: 1; display: grid; grid-template-columns: 1fr 15px 55px; }
.desk { display: flex; justify-content: center; align-items: flex-start; padding: 21px 0 6px; }
.pages { position: relative; display: flex; gap: 20px; }
.pages::before {
  content: ""; position: absolute; left: 876px; top: -4px; width: 18px; height: 560px;
  background: linear-gradient(#e6dce7 80%, #dcdee3);
}
.page {
  position: relative; width: 874px; padding: 87px 100px 120px;
  background: #fff; border: 1px solid #cbc9b8;
  color: #1a1a1a; font: 300 19px/41px "Noto Sans CJK SC", sans-serif;
}
.page > p, .page > h1 { margin: 0; height: 41px; white-space: pre; }
.page .n { font: 400 18px/20px Lato, "Noto Sans CJK SC", sans-serif; }
.page h1 { font-size: 26px; font-weight: 300; text-align: center; line-height: 36px; }
.page .subtitle { text-align: center; }
.page .subtitle strong { color: #f00; font-size: 26px; line-height: 30px; font-weight: 700; }
.page .subtitle strong .n { font-size: 26px; font-weight: 700; line-height: 30px; }
.page .in1 { padding-left: 19px; }
.page .in2 { padding-left: 38px; }
.page .center { text-align: center; }
.page em {
  font-style: normal; padding-bottom: 1px;
  background: radial-gradient(circle, #111 1px, transparent 2px) 0 100% / 19px 5px repeat-x;
}
.rule { display: inline-block; border-bottom: 1px solid #111; vertical-align: -4px; }
.w38 { width: 38px; }
.w48 { width: 48px; }
.pairs, .groups, .options { display: grid; padding-left: 19px; }
.pairs { position: relative; grid-template-columns: 143px 189px 154px 1fr; }
.pairs::before { content: ""; position: absolute; left: 292px; top: 0; bottom: -6px; width: 1px; background: #58a4da; }
.groups { grid-template-columns: 134px 116px 113px 115px 1fr; }
.options { grid-template-columns: 206px 216px 1fr; white-space: pre; }
.options.wide { grid-template-columns: 216px 215px 1fr; }
.fill { display: flex; }
.answer { flex: 1; height: 32px; margin-right: 8px; border-bottom: 1px solid #111; text-align: right; }
.crop { position: absolute; width: 27px; height: 26px; border: 0 solid #cbc9b8; }
.crop.tl { left: 74px; top: 57px; border-width: 0 1px 1px 0; }
.crop.tr { right: 74px; top: 57px; border-width: 0 0 1px 1px; }
.crop.bl { left: 74px; bottom: 36px; border-width: 1px 1px 0 0; }
.crop.br { right: 74px; bottom: 36px; border-width: 1px 0 0 1px; }
.grip { position: absolute; left: 57px; top: 95px; }

.scroll { display: flex; flex-direction: column; align-items: center; gap: 8px; padding-top: 5px; border-right: 1px solid #cbc9b8; }
.scroll .thumb { width: 8px; height: 382px; border-radius: 4px; background: #cbc9b8; }
.side { display: flex; flex-direction: column; align-items: center; gap: 22px; padding-top: 19px; }
.side .fold { margin-bottom: -4px; }
.side svg, .view svg { fill: none; stroke: #333; stroke-width: 1.2; }

/* status bar */
.status { display: flex; align-items: center; height: 26px; padding: 0 16px; border-top: 1px solid #cbc9b8; border-bottom: 2px solid #d0d0d0; }
.status > span { display: flex; align-items: center; gap: 6px; padding: 0 12px; border-left: 1px solid #cbc9b8; }
.status > .s1 { padding-left: 0; border: 0; }
.status > .s4 { padding-left: 14px; border: 0; }
.status > .s5 { padding-left: 15px; }
.status > .s6 { padding: 0 20px 0 8px; border: 0; }
.status > .s7 { padding: 0 14px; }
.view { display: flex; align-items: center; gap: 17px; margin-left: auto; }
.view .pressed { display: flex; padding: 5px; border-radius: 4px; background: #bbb; }
.view .fit { margin-left: 8px; }
.view input {
  appearance: none; width: 106px; height: 10px; margin: 0;
  background: linear-gradient(to right, #1c5cc8 51%, #a8a8a8 51%) center / 100% 2px no-repeat;
}
.view input::-webkit-slider-thumb {
  appearance: none; width: 10px; height: 10px; border-radius: 50%;
  background: #bbb; border: 2px solid #eee;
}

/* explorer window */
.explorer {
  position: absolute; right: 0; bottom: 16px; width: 780px; overflow: hidden;
  background: #fff; color: #222; box-shadow: 0 2px 12px 2px rgba(0, 0, 0, .35);
}
.ex-title { display: flex; align-items: center; gap: 9px; height: 31px; padding: 0 21px 0 10px; background: #b9b9b9; }
.ex-title i { width: 1px; height: 12px; background: #888; }
.ex-min { margin-left: auto; }
.ex-tabs { display: flex; height: 26px; border-bottom: 1px solid #dadbdc; }
.ex-tabs button { width: 53px; line-height: 24px; }
.ex-tabs .file-tab { width: 56px; height: 23px; background: #6a6a6a; color: #fff; }
.ex-tabs .on { width: 52px; height: 26px; background: #f5f5f5; border: 1px solid #dadbdc; border-bottom: 0; }
.ribbon { display: flex; height: 108px; background: #f5f5f5; border-bottom: 1px solid #dadbdc; }
.group { flex: none; display: flex; flex-direction: column; justify-content: space-between; margin: 3px 0 2px; border-right: 1px solid #dadbdc; }
.g-clip { width: 256px; }
.g-org { width: 187px; }
.g-new { width: 138px; }
.g-open { width: 127px; }
.g-sel { width: 86px; border: 0; }
.items { display: flex; padding: 5px 4px 0; }
.g-org .items { padding-left: 5px; }
.label { text-align: center; color: #555; }
.big { display: flex; flex-direction: column; align-items: center; width: 42px; white-space: normal; }
.big > svg:first-child { margin-bottom: 1px; }
.pin { width: 54px; }
.dim { color: #888; }
.bar { width: 1px; height: 56px; margin: 6px 2px 0; background: #dadbdc; }
.col { width: 48px; }
.small { display: flex; align-items: center; gap: 4px; height: 22px; }
.cut { padding-left: 4px; }
.smalls { display: flex; flex-direction: column; gap: 0; padding-left: 3px; }
.smalls svg:first-child { width: 16px; }
.smalls svg:last-child:not(:first-child) { margin-left: 4px; }
.smalls.three { gap: 3px; }
.ex-nav { display: flex; align-items: center; gap: 14px; height: 35px; padding: 0 0 0 12px; color: #555; }
.address {
  display: flex; align-items: center; gap: 10px; flex: none; width: 504px; height: 24px;
  padding-left: 3px; border: 1px solid #d9d9d9; color: #222; margin-left: -8px;
}
.address b { color: #666; font-weight: 400; }
.drop { margin-left: auto; }
.reload { width: 17px; height: 22px; border-left: 1px solid #d9d9d9; margin-left: -4px; }
.search { flex: 1; min-width: 0; height: 24px; margin-left: -2px; padding: 0 8px; border: 1px solid #d9d9d9; border-right: 0; font: inherit; }
.search::placeholder { color: #777; opacity: 1; }
.ex-body { display: flex; height: 316px; padding-top: 1px; }
.tree { width: 233px; overflow: hidden; color: #111; }
.tree li { display: flex; align-items: center; gap: 5px; height: 24px; padding-left: 32px; }
.tree .last { margin-bottom: 8px; }
.tree .root { padding-left: 24px; }
.tree .sel { background: #dcdce2; }
.tree-scroll { display: flex; flex-direction: column; align-items: center; width: 15px; padding: 4px 0; background: #f3f3f3; }
.tree-scroll .thumb { width: 15px; height: 79px; margin: 137px 0 auto; background: #cbc9b8; }
.files { margin-left: 3px; padding: 7px 0 0 15px; border-left: 1px solid #eee; color: #111; white-space: nowrap; }
.files li { display: flex; align-items: center; gap: 2px; width: 359px; height: 20px; margin-bottom: 1px; padding-left: 4px; border: 1px solid transparent; }
.files .sel { background: #d0f1fb; border-color: #86cdf5; }
.ex-status { display: flex; align-items: center; height: 22px; padding-left: 14px; color: #1e3a5c; }
.ex-status span { padding-right: 10px; }
.ex-status span:nth-child(2) { padding-left: 10px; border-left: 1px solid #ddd; }
.ex-status span:nth-child(3) { border-right: 1px solid #ddd; }

/* promotional stamp laid over the window */
.stamp { position: absolute; right: 30px; bottom: 30px; width: 372px; }
.stamp svg { display: block; }
.stamp strong {
  position: absolute; inset: 0 12px 14px 0; display: flex; align-items: center; justify-content: center; gap: 10px;
  color: #f4ff00; font: 900 62px/80px "Noto Sans CJK SC", sans-serif;
  -webkit-text-stroke: 8px #111; paint-order: stroke fill;
}
```
